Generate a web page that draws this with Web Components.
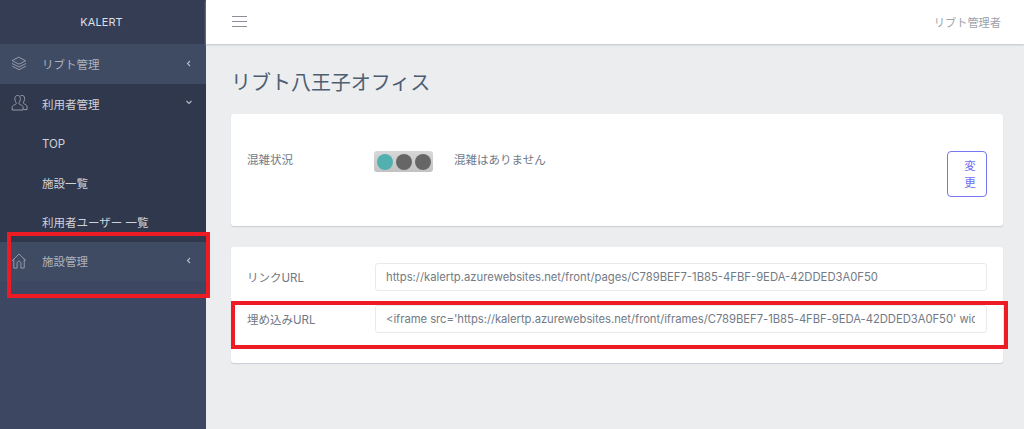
<!DOCTYPE html>
<html lang="ja">
<head>
<meta charset="utf-8">
<title>KALERT</title>
<style>
html,body{margin:0;padding:0;height:100%}
body{font-family:Inter,"Noto Sans CJK JP",sans-serif;background:#ebedef}
</style>
</head>
<body>
<app-shell>
  <side-nav slot="nav">
    <nav-item label="リブト管理" icon="layers" chevron="left" active></nav-item>
    <nav-item label="利用者管理" icon="users" chevron="down" open></nav-item>
    <nav-item label="TOP" sub open></nav-item>
    <nav-item label="施設一覧" sub open></nav-item>
    <nav-item label="利用者ユーザー 一覧" sub open></nav-item>
    <nav-item label="施設管理" icon="home" chevron="left" active></nav-item>
  </side-nav>
  <top-bar slot="top" user="リブト管理者"></top-bar>
  <h1 slot="title">リブト八王子オフィス</h1>
  <page-card slot="cards" class="status">
    <status-row></status-row>
  </page-card>
  <page-card slot="cards" class="urls">
    <url-field label="リンクURL" value="https://kalertp.azurewebsites.net/front/pages/C789BEF7-1B85-4FBF-9EDA-42DDED3A0F50"></url-field>
    <url-field tight label="埋め込みURL" value="&lt;iframe src='https://kalertp.azurewebsites.net/front/iframes/C789BEF7-1B85-4FBF-9EDA-42DDED3A0F50' width='100%' height='100%'&gt;&lt;/iframe&gt;"></url-field>
  </page-card>
</app-shell>

<script>
const ICONS = {
  layers: '<path d="M8.500 2 15.500 5.600 8.500 9.200 1.500 5.600Z"/><path d="M1.500 8.600 8.500 12.200 15.500 8.600"/><path d="M1.500 11.400 8.500 15 15.500 11.400"/>',
  users: '<path d="M1.200 16v-2.200c0-1.500 1-2.200 2.400-2.800 1.200-.5 2-.9 2-1.700 0-.6-.5-1-.9-1.900C4.200 6.300 4.100 5 4.100 4.200 4.100 2.300 5.300 1 7 1s2.900 1.300 2.900 3.200c0 .8-.1 2.100-.6 3.200-.4.900-.9 1.300-.9 1.900 0 .8.800 1.200 2 1.700 1.400.6 2.400 1.300 2.400 2.800V16Z"/><path d="M10.200 1.300C10.700 1.100 11.200 1 11.700 1c1.600 0 2.700 1.200 2.700 3 0 .8-.1 2-.6 3-.3.800-.8 1.200-.8 1.800 0 .8.800 1.100 1.800 1.600 1.200.5 2.200 1.200 2.200 2.500V16h-3.300"/>',
  home: '<path d="M1.500 8.500 8.500 1.500 15.500 8.500"/><path d="M3 7v9.500H6.500V11.200c0-1.100.9-2 2-2s2 .9 2 2v5.300H14V7"/>'
};

class AppShell extends HTMLElement {
  constructor() {
    super();
    this.attachShadow({ mode: 'open' }).innerHTML = `
      <style>
        :host{display:grid;grid-template-columns:206px 1fr;height:429px;overflow:hidden;position:relative;
          font-family:Inter,"Noto Sans CJK JP",sans-serif}
        .main{display:flex;flex-direction:column;min-width:0;background:#ebedef}
        .content{display:flex;flex-direction:column;padding:25px 21px 0 25px}
        ::slotted(h1){margin:0 0 17px;font-size:20px;line-height:28px;font-weight:400;color:#4f5d73;letter-spacing:-.03px}
        .cards{display:flex;flex-direction:column;gap:21px}
        .mark{position:absolute;box-sizing:border-box;border:4px solid #ed1c24;pointer-events:none}
        .mark.a{left:7px;top:232px;width:203px;height:66px}
        .mark.b{left:231px;top:301px;width:777px;height:48px}
      </style>
      <slot name="nav"></slot>
      <div class="main">
        <slot name="top"></slot>
        <div class="content">
          <slot name="title"></slot>
          <div class="cards"><slot name="cards"></slot></div>
        </div>
      </div>
      <div class="mark a"></div>
      <div class="mark b"></div>`;
  }
}

class SideNav extends HTMLElement {
  constructor() {
    super();
    this.attachShadow({ mode: 'open' }).innerHTML = `
      <style>
        :host{display:flex;flex-direction:column;background:#3d4761;height:429px;box-shadow:1px 0 0 #d8dbe0}
        .brand{height:44px;display:flex;align-items:center;justify-content:center;background:#353d55;
          color:#dcdfe4;font-size:11px;letter-spacing:.1px;padding-right:3px;box-sizing:border-box}
      </style>
      <div class="brand">KALERT</div>
      <slot></slot>`;
  }
}

class NavItem extends HTMLElement {
  constructor() {
    super();
    const icon = ICONS[this.getAttribute('icon')];
    const chevron = this.getAttribute('chevron');
    const chevronPath = chevron === 'down' ? 'M1.500 2 4 4.500 6.500 2' : 'M5 1 2.500 3.500 5 6';
    this.attachShadow({ mode: 'open' }).innerHTML = `
      <style>
        :host{display:flex;align-items:center;box-sizing:border-box;height:39.500px;background:#30384d;color:#cfd2d9;font-size:11.500px;padding-left:42px;padding-top:3px;position:relative}
        :host([active]){background:#3f4a63;color:#adb2be;padding-top:2px}
        span{line-height:16px}
        .icon{position:absolute;left:11px;top:50%;transform:translateY(-50%);width:17px;height:18px;
          fill:none;stroke:#9a9fad;stroke-width:1;stroke-linejoin:round;stroke-linecap:round}
        .chev{position:absolute;right:13px;top:50%;margin-top:-4px;width:8px;height:7px;
          fill:none;stroke:#b9bdc8;stroke-width:1.100}
      </style>
      ${icon ? `<svg class="icon" viewBox="0 0 18 18">${icon}</svg>` : ''}
      <span>${this.getAttribute('label')}</span>
      ${chevron ? `<svg class="chev" viewBox="0 0 8 7"><path d="${chevronPath}"/></svg>` : ''}`;
  }
}

class TopBar extends HTMLElement {
  constructor() {
    super();
    this.attachShadow({ mode: 'open' }).innerHTML = `
      <style>
        :host{display:flex;align-items:center;justify-content:space-between;height:44px;background:#fff;
          padding:0 23px 0 26px;box-shadow:0 1px 2px #bfc3cc;color:#9da2ab;font-size:11.200px;position:relative}
        svg{width:15px;height:13px;stroke:#8a8f99;stroke-width:1.100;display:block;margin-top:-1px}
      </style>
      <svg viewBox="0 0 15 13"><path d="M0 1.500H15M0 6.500H15M0 11.500H15"/></svg>
      <span>${this.getAttribute('user')}</span>`;
  }
}

class PageCard extends HTMLElement {
  constructor() {
    super();
    this.attachShadow({ mode: 'open' }).innerHTML = `
      <style>
        :host{display:block;background:#fff;border-radius:3px;box-shadow:0 1px 1px #c9ccd4;box-sizing:border-box}
        :host(.status){height:112px;padding:37px 16px 0}
        :host(.urls){height:116px;padding:16px 16px 0;display:flex;flex-direction:column;gap:14px}
      </style>
      <slot></slot>`;
  }
}

class TrafficLight extends HTMLElement {
  constructor() {
    super();
    this.attachShadow({ mode: 'open' }).innerHTML = `
      <style>
        :host{display:flex;align-items:center;justify-content:center;gap:3px;width:59px;height:21px;border-radius:3px;
          background:linear-gradient(#d8d8d8,#c2c2c2)}
        i{width:16px;height:16px;border-radius:50%;background:#666}
        i.on{background:#52b0b0}
      </style>
      <i class="on"></i><i></i><i></i>`;
  }
}

class StatusRow extends HTMLElement {
  constructor() {
    super();
    this.attachShadow({ mode: 'open' }).innerHTML = `
      <style>
        :host{display:grid;grid-template-columns:127px 59px 21px 1fr 40px;align-items:start;color:#6f7885;font-size:11.500px;line-height:18px}
        traffic-light{grid-column:2}
        .msg{grid-column:4}
        button{grid-column:5;box-sizing:border-box;width:40px;height:46px;margin:0;padding:1px 5px 0 11px;background:#fff;border:1px solid #7676f0;border-radius:4px;
          color:#6f6ff0;font:inherit;font-size:11.500px;line-height:17px;text-align:center}
      </style>
      <div class="label">混雑状況</div>
      <traffic-light></traffic-light>
      <div class="msg">混雑はありません</div>
      <button>変更</button>`;
  }
}

class UrlField extends HTMLElement {
  constructor() {
    super();
    this.attachShadow({ mode: 'open' }).innerHTML = `
      <style>
        :host{display:grid;grid-template-columns:128px 1fr;align-items:center;color:#6f7885;font-size:11.500px}
        .box{box-sizing:border-box;height:28px;border:1px solid #e8eaed;border-radius:3px;background:#fff;padding:0 11px 0 10px;
          display:flex;align-items:center;min-width:0}
        .val{white-space:nowrap;overflow:hidden;color:#737a85;font-size:11.280px;width:100%}
        :host([tight]) .val{letter-spacing:-.04px}
      </style>
      <div class="label"></div>
      <div class="box"><div class="val"></div></div>`;
    this.shadowRoot.querySelector('.label').textContent = this.getAttribute('label');
    this.shadowRoot.querySelector('.val').textContent = this.getAttribute('value');
  }
}

customElements.define('traffic-light', TrafficLight);
customElements.define('status-row', StatusRow);
customElements.define('url-field', UrlField);
customElements.define('page-card', PageCard);
customElements.define('nav-item', NavItem);
customElements.define('side-nav', SideNav);
customElements.define('top-bar', TopBar);
customElements.define('app-shell', AppShell);
</script>
</body>
</html>
